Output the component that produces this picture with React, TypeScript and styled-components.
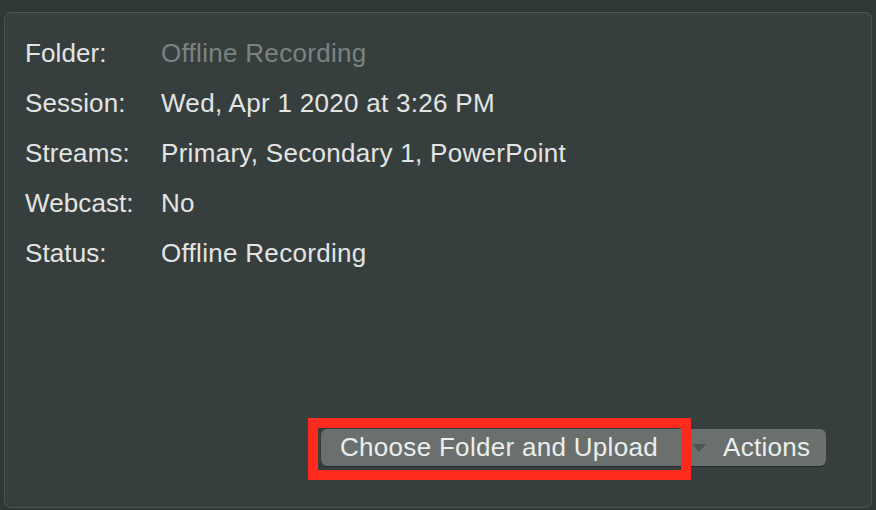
import React from "react";
import styled, { createGlobalStyle } from "styled-components";

const Global = createGlobalStyle`
  html, body { margin: 0; padding: 0; background: #2f3837; }
  body { width: 876px; height: 510px; overflow: hidden; font-family: "Liberation Sans", Arial, sans-serif; }
  #root { width: 876px; height: 510px; }
`;

const Page = styled.div`
  box-sizing: border-box;
  width: 876px;
  height: 510px;
  padding: 12px 4px 2px 4px;
  display: flex;
`;

const Panel = styled.div`
  box-sizing: border-box;
  flex: 1;
  display: flex;
  flex-direction: column;
  background: #373f3e;
  border: 1px solid #4a5352;
  border-top-color: #505958;
  border-radius: 7px;
  padding: 15px 0 41px 0;
`;

const InfoList = styled.div`
  display: grid;
  grid-template-columns: 136px 1fr;
  padding-left: 20px;
`;

const Label = styled.div`
  font-size: 26px;
  line-height: 50px;
  color: #e3e5e4;
  letter-spacing: 0.1px;
`;

const Value = styled.div<{ $muted?: boolean }>`
  font-size: 26px;
  line-height: 50px;
  color: ${(p) => (p.$muted ? "#7b8381" : "#e3e5e4")};
  letter-spacing: 0.3px;
  white-space: nowrap;
`;

const Spacer = styled.div`
  flex: 1;
`;

const ButtonRow = styled.div`
  display: flex;
  justify-content: flex-end;
  padding-right: 45px;
`;

const Segmented = styled.div`
  position: relative;
  display: flex;
  height: 37px;
  border-radius: 6px;
  background: #6a706e;
  box-shadow: 0 1px 1px rgba(0, 0, 0, 0.35);
`;

const Segment = styled.div<{ $w: number }>`
  box-sizing: border-box;
  width: ${(p) => p.$w}px;
  display: flex;
  align-items: center;
  gap: 17px;
  padding-left: 19px;
  font-size: 26px;
  color: #eceeed;
  letter-spacing: 0.3px;
  white-space: nowrap;
`;

const ArrowSeg = styled(Segment)`
  padding-left: 11px;
`;

const Arrow = styled.svg`
  width: 14px;
  height: 8px;
  flex: none;
`;

const Highlight = styled.div`
  position: absolute;
  left: -13px;
  top: -11px;
  width: 383px;
  height: 62px;
  box-sizing: border-box;
  border: 10px solid #fe2a1e;
  pointer-events: none;
`;

const rows: { label: string; value: string; muted?: boolean }[] = [
  { label: "Folder:", value: "Offline Recording", muted: true },
  { label: "Session:", value: "Wed, Apr 1 2020 at 3:26 PM" },
  { label: "Streams:", value: "Primary, Secondary 1, PowerPoint" },
  { label: "Webcast:", value: "No" },
  { label: "Status:", value: "Offline Recording" },
];

export default function App() {
  return (
    <>
      <Global />
      <Page>
        <Panel>
          <InfoList>
            {rows.map((r) => (
              <React.Fragment key={r.label}>
                <Label>{r.label}</Label>
                <Value $muted={r.muted}>{r.value}</Value>
              </React.Fragment>
            ))}
          </InfoList>
          <Spacer />
          <ButtonRow>
            <Segmented>
              <Segment $w={360}>Choose Folder and Upload</Segment>
              <ArrowSeg $w={145}>
                <Arrow viewBox="0 0 14 8">
                  <path d="M0 0 H14 L7 8 Z" fill="#4f5554" />
                </Arrow>
                Actions
              </ArrowSeg>
              <Highlight />
            </Segmented>
          </ButtonRow>
        </Panel>
      </Page>
    </>
  );
}
